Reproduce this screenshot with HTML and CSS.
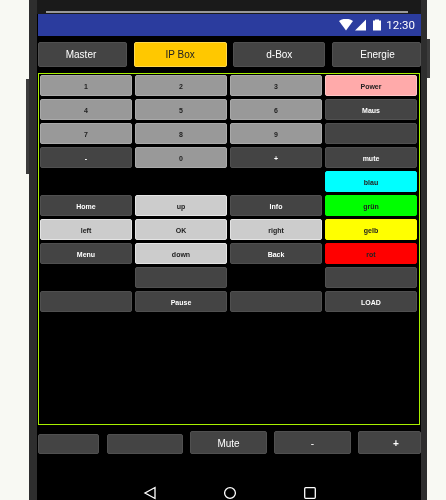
FILE: index.html
```html
<!DOCTYPE html>
<html lang="en">
<head>
  <meta charset="UTF-8">
  <title>Remote</title>
  <link rel="stylesheet" href="styles.css">
</head>
<body>
  <div class="phone">
    <span class="side side-left"></span>
    <span class="side side-right"></span>
    <div class="speaker"></div>
    <div class="status">
      <svg class="status-icons" width="42" height="12" viewBox="0 0 42 12">
        <path d="M0 2C4-1 10-1 14 2L7 11.500Z" fill="#fff"/>
        <path d="M16 11.500L27 .5V11.500Z" fill="#fff"/>
        <path d="M34 1.500H36V.5H40V1.500H42V11.500H34Z" fill="#fff"/>
      </svg>
      <span class="clock">12:30</span>
    </div>
    <div class="tabs">
      <button class="btn tab t1">Master</button>
      <button class="btn tab t2 amber">IP Box</button>
      <button class="btn tab t3">d-Box</button>
      <button class="btn tab t4">Energie</button>
    </div>
    <div class="panel">
      <button class="btn grey">1</button>
      <button class="btn grey">2</button>
      <button class="btn grey">3</button>
      <button class="btn pink">Power</button>
      <button class="btn grey">4</button>
      <button class="btn grey">5</button>
      <button class="btn grey">6</button>
      <button class="btn">Maus</button>
      <button class="btn grey">7</button>
      <button class="btn grey">8</button>
      <button class="btn grey">9</button>
      <button class="btn"></button>
      <button class="btn">-</button>
      <button class="btn grey">0</button>
      <button class="btn">+</button>
      <button class="btn">mute</button>
      <span></span>
      <span></span>
      <span></span>
      <button class="btn cyan">blau</button>
      <button class="btn">Home</button>
      <button class="btn light">up</button>
      <button class="btn">Info</button>
      <button class="btn green">grün</button>
      <button class="btn light">left</button>
      <button class="btn light">OK</button>
      <button class="btn light">right</button>
      <button class="btn yellow">gelb</button>
      <button class="btn">Menu</button>
      <button class="btn light">down</button>
      <button class="btn">Back</button>
      <button class="btn red">rot</button>
      <span></span>
      <button class="btn"></button>
      <span></span>
      <button class="btn"></button>
      <button class="btn"></button>
      <button class="btn">Pause</button>
      <button class="btn"></button>
      <button class="btn">LOAD</button>
    </div>
    <div class="bottom">
      <button class="btn low b1"></button>
      <button class="btn low b2"></button>
      <button class="btn tall b3">Mute</button>
      <button class="btn tall b4">-</button>
      <button class="btn tall b5">+</button>
    </div>
    <div class="nav">
      <svg width="14" height="14" viewBox="0 0 14 14"><path d="M12 1.500V12.500L2 7Z" fill="none" stroke="#fff" stroke-width="1.300"/></svg>
      <svg width="14" height="14" viewBox="0 0 14 14"><circle cx="7" cy="7" r="5.400" fill="none" stroke="#fff" stroke-width="1.300"/></svg>
      <svg width="14" height="14" viewBox="0 0 14 14"><rect x="1.700" y="1.700" width="10.600" height="10.600" rx="1" fill="none" stroke="#fff" stroke-width="1.300"/></svg>
    </div>
  </div>
</body>
</html>
```

FILE: styles.css
```css
html, body {
  margin: 0;
  height: 500px;
  overflow: hidden;
  background: #f8f9f3;
}

body {
  padding-left: 29px;
  font-family: "Liberation Sans", Arial, sans-serif;
}

/* the reference is a slightly soft, scaled-up capture */
.phone {
  position: relative;
  width: 398px;
  height: 500px;
  box-sizing: border-box;
  padding-left: 1px;
  background: #000;
  border-left: 8px solid #2e2e2e;
  border-right: 6px solid #2e2e2e;
  filter: blur(0.3px);
}

.side {
  position: absolute;
  width: 3px;
  background: #3c3c3c;
}

.side-left {
  left: -11px;
  top: 79px;
  height: 95px;
}

.side-right {
  right: -9px;
  top: 39px;
  height: 39px;
}

.speaker {
  height: 14px;
  box-sizing: border-box;
  margin-left: -1px;
  padding: 11px 13px 0 9px;
  background: #1a1a1a;
}

.speaker::after {
  content: "";
  display: block;
  height: 2px;
  background: #999;
}

.status {
  display: flex;
  align-items: center;
  justify-content: flex-end;
  gap: 5px;
  height: 22px;
  padding-right: 6px;
  background: #2b3c9e;
}

.clock {
  color: #fff;
  font: 11.500px Roboto, sans-serif;
}

.btn {
  display: block;
  margin: 0;
  padding: 1px 0 0;
  height: 21px;
  border: 1px solid #505050;
  border-radius: 2px;
  background: #444;
  color: #fff;
  font: bold 7px "Liberation Sans", Arial, sans-serif;
}

.tabs {
  display: flex;
  justify-content: space-between;
  margin-top: 6px;
}

.tab {
  height: 25px;
  padding-top: 0;
  font-size: 10px;
  font-weight: normal;
}

.t1 { width: 89px; padding-right: 3px; }
.t2 { width: 93px; }
.t3 { width: 92px; }
.t4 { width: 89px; padding-left: 2px; }

.amber {
  background: #ffc800;
  border-color: #ffd84d;
  color: #222;
}

.panel {
  display: grid;
  grid-template-columns: repeat(4, 92px);
  grid-auto-rows: 21px;
  gap: 3px;
  align-content: start;
  box-sizing: border-box;
  width: 382px;
  height: 352px;
  margin-top: 6px;
  padding: 1px 0 0 1px;
  border: 1px solid #a8f000;
}

.grey {
  background: #999;
  border-color: #aaa;
  color: #222;
}

.light {
  background: #ccc;
  border-color: #e4e4e4;
  color: #222;
}

.pink {
  background: #ffaaaa;
  border-color: #ffc4c4;
  color: #222;
}

.cyan { background: #0ff; border-color: #0ff; color: #222; }
.green { background: #0f0; border-color: #0f0; color: #222; }
.yellow { background: #ff0; border-color: #ff0; color: #222; }
.red { background: #f00; border-color: #f00; color: #222; }

.bottom {
  display: flex;
  align-items: flex-end;
  height: 23px;
  margin-top: 6px;
}

.low { height: 20px; }
.tall { height: 23px; font-size: 10px; font-weight: normal; }

.b1 { width: 61px; margin-right: 8px; }
.b2 { width: 76px; margin-right: 7px; }
.b3 { width: 77px; margin-right: 7px; }
.b4 { width: 77px; margin-right: 7px; }
.b5 { width: 63px; padding-left: 13px; font-weight: bold; }

.nav {
  display: flex;
  justify-content: center;
  gap: 66px;
  margin-top: 32px;
}
```
